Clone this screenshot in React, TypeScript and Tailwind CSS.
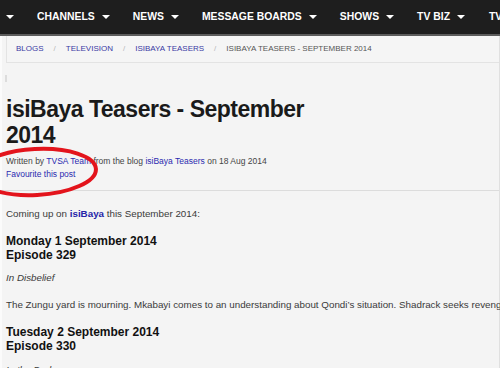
import React from 'react';

const navItems = ['CHANNELS', 'NEWS', 'MESSAGE BOARDS', 'SHOWS', 'TV BIZ'];

const crumbs = ['BLOGS', 'TELEVISION', 'ISIBAYA TEASERS'];

const Caret = () => (
  <span className="inline-block w-0 h-0 border-l-[4px] border-r-[4px] border-t-[4px] border-l-transparent border-r-transparent border-t-white" />
);

const TopNav = () => (
  <nav className="h-[36px] bg-[#1e1e1e] border-b-2 border-[#5c5c5c] flex items-center text-white font-bold text-[10.4px] whitespace-nowrap overflow-hidden">
    <span className="ml-[6px] flex items-center">
      <Caret />
    </span>
    {navItems.map((item) => (
      <span key={item} className="ml-[23px] flex items-center gap-[7px]">
        <span>{item}</span>
        <Caret />
      </span>
    ))}
    <span className="ml-[24px]">TV</span>
  </nav>
);

const App = () => {
  return (
    <div
      className="w-[500px] h-[368px] overflow-hidden bg-[#f4f4f4] text-[#333] relative"
      style={{ fontFamily: '"Liberation Sans", Arial, sans-serif' }}
    >
      <TopNav />

      <div className="border-l-2 border-[#fbfbfb] border-r border-r-[#e0e0e0] pl-[4px] h-[332px]">
        {/* breadcrumb */}
        <div className="h-[27px] border border-[#e3e3e3] border-t-0 border-r-0 bg-[#f5f5f5] flex items-center pl-[9px] text-[8px] whitespace-nowrap">
          {crumbs.map((c) => (
            <span key={c} className="flex items-center">
              <a className="text-[#3a3aa4]">{c}</a>
              <span className="text-[#b8b8b8] px-[10px]">/</span>
            </span>
          ))}
          <span className="text-[#555]">ISIBAYA TEASERS - SEPTEMBER 2014</span>
        </div>

        <div className="mt-[12px] -ml-[1px] w-[2px] h-[7px] bg-[#dcdcdc]" />

        <h1 className="mt-[14px] w-[330px] text-[23px] leading-[26px] font-bold tracking-[-0.5px] text-[#1a1a1a]">
          isiBaya Teasers - September 2014
        </h1>

        <div className="mt-[7px] text-[8.5px] leading-[13px] text-[#444]">
          <p>
            Written by <a className="text-[#2b2bb0]">TVSA Team</a> from the blog{' '}
            <a className="text-[#2b2bb0]">isiBaya Teasers</a> on 18 Aug 2014
          </p>
          <p>
            <a className="text-[#2b2bb0]">Favourite this post</a>
          </p>
        </div>
      </div>

      <div className="absolute left-0 right-[1px] top-[190px] border-t border-[#dcdcdc]" />

      <div className="absolute left-[6px] top-[191px] text-[9.8px] leading-[14px] whitespace-nowrap text-[#3a3a3a]">
        <p className="mt-[16px]">
          Coming up on <a className="font-bold text-[#2424a8]">isiBaya</a> this September 2014:
        </p>

        <h3 className="mt-[13px] text-[12px] leading-[14px] font-bold text-[#111]">
          Monday 1 September 2014
          <br />
          Episode 329
        </h3>
        <p className="mt-[9px] italic">In Disbelief</p>
        <p className="mt-[13px]">
          The Zungu yard is mourning. Mkabayi comes to an understanding about Qondi’s situation. Shadrack seeks revenge.
        </p>

        <h3 className="mt-[13px] text-[12px] leading-[14px] font-bold text-[#111]">
          Tuesday 2 September 2014
          <br />
          Episode 330
        </h3>
        <p className="mt-[10px] italic">In the Dark</p>
      </div>

      {/* red annotation circle */}
      <svg className="absolute left-0 top-[140px]" width="110" height="64" viewBox="0 0 110 64">
        <ellipse
          cx="36"
          cy="32"
          rx="60"
          ry="23"
          fill="none"
          stroke="#e3141c"
          strokeWidth="4"
          transform="rotate(-3 36 32)"
        />
      </svg>
    </div>
  );
};

export default App;
